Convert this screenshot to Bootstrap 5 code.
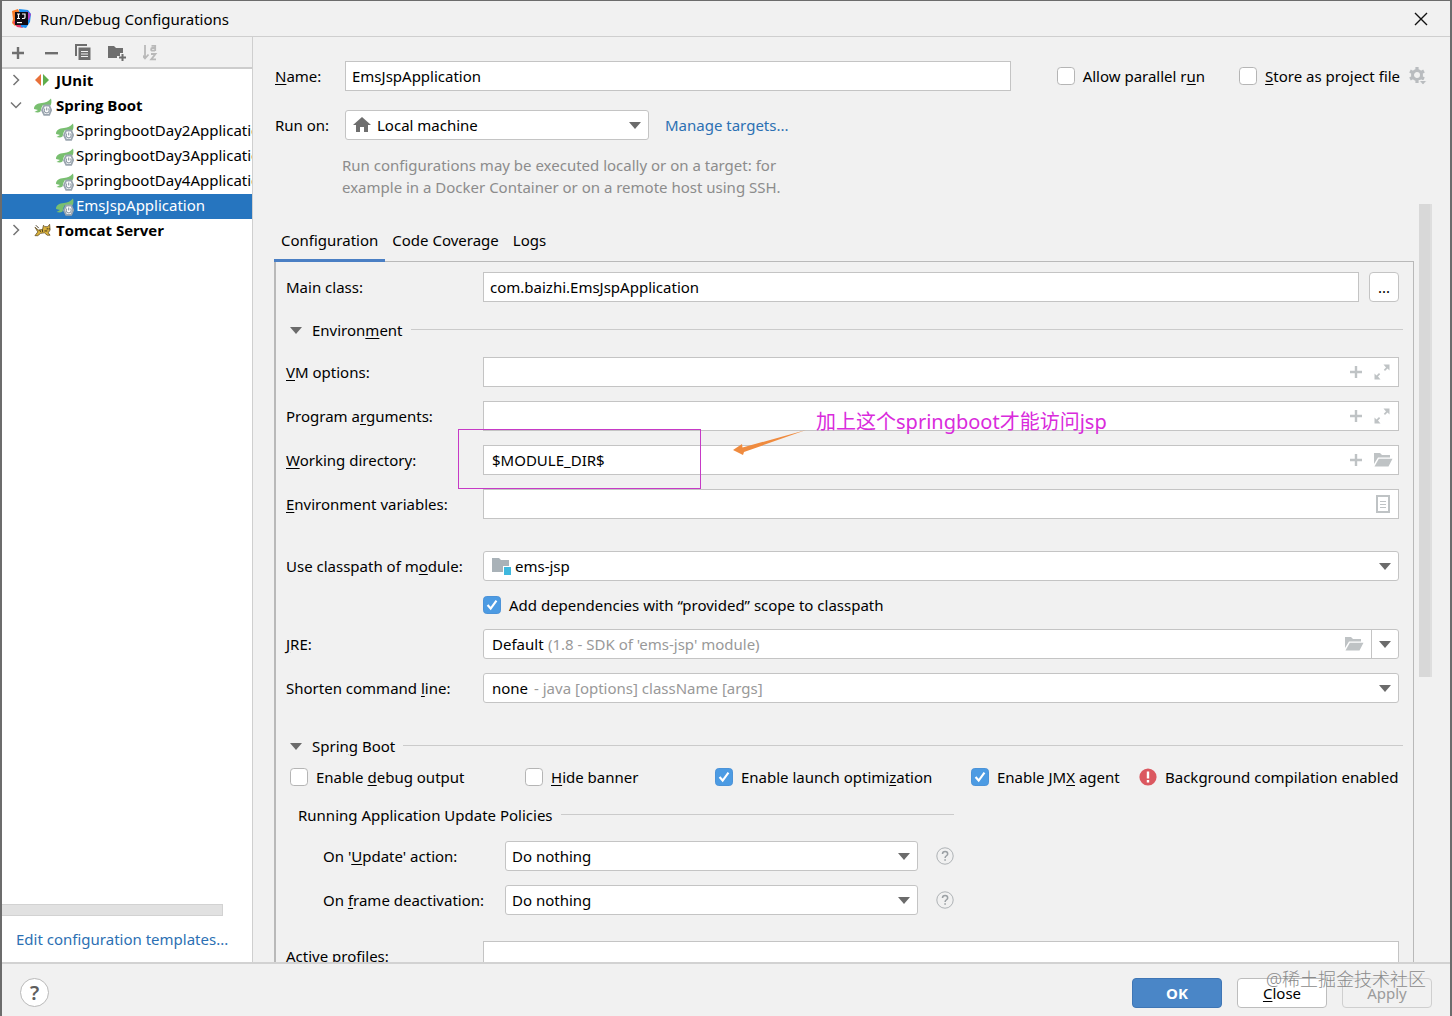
<!DOCTYPE html>
<html lang="en">
<head>
<meta charset="utf-8">
<meta name="viewport" content="width=device-width, initial-scale=1">
<title>Run/Debug Configurations</title>
<link href="https://cdn.jsdelivr.net/npm/bootstrap@5.3.0/dist/css/bootstrap.min.css" rel="stylesheet">
<style>
  :root { --line: #c4c4c4; --panel: #f1f1f1; --accent: #4a7fc4; --link: #2c70b3; --muted: #8c8c8c; --icon: #bfc3c5; }
  body { font-family: "Noto Sans", "Noto Sans CJK SC", sans-serif; font-size: 15px; line-height: 22px; color: #000; background: var(--panel); }
  a { color: var(--link); text-decoration: none; }
  u { text-underline-offset: 2px; }
  svg { display: block; flex: none; }
  .dialog { border: solid #6c6c6c; border-width: 1px 2px 0; }
  .title-bar { height: 36px; border-bottom: 1px solid #cfcfcf; padding: 1px 22px 0 9px; }
  .plain-btn { border: 0; background: none; padding: 0; color: inherit; }
  .side { width: 251px; background: #fff; border-right: 1px solid #cfcfcf; }
  .tools { height: 32px; background: var(--panel); border-bottom: 2px solid #cdcdcd; padding: 2px 0 0 9px; gap: 16px; }
  .tree-row { height: 25px; padding-bottom: 2px; white-space: nowrap; overflow: hidden; }
  .tree-head { padding-left: 8px; gap: 4px; font-family: "Open Sans", sans-serif; font-weight: 700; }
  .tree-leaf { padding-left: 54px; gap: 2px; }
  .tree-leaf.current { background: #2675bf; color: #fff; }
  .leaf-icon { margin-top: 4px; }
  .h-thumb { width: 221px; height: 12px; background: #e1e1e1; border: 1px solid #d2d2d2; border-left: 0; }
  .side-foot { padding: 12px 14px; }
  .content-top { padding: 24px 22px 0; }
  .top-label { width: 70px; }
  .form-control, .form-select { height: 30px; padding: 0 8px; font-size: 15px; line-height: 22px; color: #000; border-color: var(--line); border-radius: 0; background-color: #fff; }
  .form-select { border-radius: 3px; padding-right: 28px; background-position: right 7px center; background-size: 12px 8px;
    --bs-form-select-bg-img: url("data:image/svg+xml,%3csvg xmlns='http://www.w3.org/2000/svg' viewBox='0 0 12 8'%3e%3cpath fill='%236b6b6b' d='M0 1h12L6 8z'/%3e%3c/svg%3e"); }
  .form-control.tight { padding-left: 6px; }
  .form-select.with-icon { padding-left: 31px; }
  .lead-icon { left: 8px; }
  .run-row { margin-top: 19px; }
  .run-on { width: 304px; }
  .name-box { flex: 0 1 666px; }
  .form-check-input { width: 18px; height: 18px; margin: 0; border: 1px solid #b5b5b5; border-radius: 3px; flex: none; }
  .top-ticks { gap: 34px; }
  .form-check-input:checked { background-color: #4c9be3; border-color: #4c93d8; }
  .form-check-input:checked[type=checkbox] {
    --bs-form-check-bg-image: url("data:image/svg+xml,%3csvg xmlns='http://www.w3.org/2000/svg' viewBox='0 0 18 18'%3e%3cpath fill='none' stroke='%23fff' stroke-width='2.4' d='M4 9l3.500 4L14 4'/%3e%3c/svg%3e"); }
  .tick { gap: 8px; line-height: 20px; }
  .hint { color: var(--muted); width: 480px; padding-left: 67px; margin-top: 14px; }
  .scroll-area { margin-top: 6px; padding: 0 18px 0 21px; gap: 5px; }
  .tabs { padding-top: 25px; margin-bottom: -1px; position: relative; }
  .tabs .nav-link { color: #000; padding: 0 7px 8px; border-bottom: 3px solid transparent; }
  .tabs .nav-link.active { border-color: var(--accent); }
  .v-thumb { width: 13px; height: 473px; background: #d8d8d8; border-right: 2px solid #dedede; flex: none; }
  .panel-box { border: 1px solid #b9b9b9; border-left-width: 2px; border-bottom: 0; padding: 10px 14px 0 10px; }
  .fields { display: grid; grid-template-columns: 197px minmax(0, 1fr); row-gap: 14px; align-items: center; }
  .fields + .fields { margin-top: 14px; }
  .fields.spaced { margin-top: 32px; }
  .section { gap: 8px; margin-right: -4px; padding-left: 4px; }
  .section svg { margin-right: 2px; }
  .section::after { content: ""; flex: 1; height: 1px; background: #cbcbcb; }
  .section-env { margin-top: 17px; margin-bottom: 16px; }
  .section-boot { margin-top: 32px; }
  .in-icons { right: 8px; gap: 10px; color: var(--icon); }
  .in-icons.close-set { right: 6px; }
  .sq-btn { width: 30px; height: 30px; border: 1px solid var(--line); border-radius: 4px; background: #fff; margin-left: 10px; }
  .mark-box { left: 172px; top: -16px; width: 243px; height: 60px; border: 1px solid #c63ac6; pointer-events: none; }
  .mark-arrow { left: 446px; top: -16px; }
  .mark-text { left: 530px; top: -38px; font-size: 20px; line-height: 30px; color: #d92bdc; white-space: nowrap; }
  .jre-folder { right: 35px; color: var(--icon); }
  .jre-split { border-left: 1px solid var(--line); right: 27px; height: 28px; }
  .gray-hint { color: #999; left: 65px; pointer-events: none; }
  .gray-hint.near { left: 51px; }
  .boot-checks { display: grid; grid-template-columns: 235fr 190fr 256fr 168fr 264fr; margin: 10px -4px 17px 4px; white-space: nowrap; line-height: 20px; }
  .policies { max-width: 656px; margin-left: 12px; }
  .policy-grid { display: grid; grid-template-columns: 182px minmax(0, 1fr) 18px; gap: 14px 0; align-items: center; padding-left: 25px; margin: 15px 0 26px; }
  .policy-grid .form-select { width: calc(100% - 18px); padding-left: 6px; }
  .foot { height: 54px; border-top: 2px solid #d2d2d2; padding: 5px 18px 0; }
  .foot .btn { width: 90px; height: 30px; padding: 0; font-size: 15px; line-height: 22px; border-radius: 4px; border: 1px solid #bdbdbd; background: #fff; color: #000; }
  .foot .btn-ok { background: #4a86c7; border-color: #3f76b5; color: #fff; font-weight: 700; }
  .foot .btn:disabled { background: var(--panel); border-color: #cfcfcf; color: #9b9b9b; opacity: 1; }
  .btn-set { gap: 15px; }
  .help-btn { width: 29px; height: 29px; border: 1px solid #b9b9b9; background: #fff; color: #5e5e5e; font-size: 20px; line-height: 26px; font-weight: 600; }
  .watermark { right: 24px; top: 1px; font-size: 18px; line-height: 28px; color: #8b8b8b; pointer-events: none; font-weight: 300; }
</style>
</head>
<body>
<svg width="0" height="0" class="position-absolute" aria-hidden="true">
  <symbol id="leaf" viewBox="0 0 18 18">
    <path fill="#79bf70" d="M0 11C0 7 3 5.500 8 5c4-.4 6-1.500 9-4.500.8 3 .5 5-.5 7L9 7l-3 5.500z"/>
    <path fill="#79bf70" d="M.500 14l7-4-1 3.500q-2 1.500-6 .5z"/>
    <path fill="#fff" stroke="#9aa5af" stroke-width="1.800" d="M10.200 7.500h5l2 4.700-2 4.700h-5l-2.200-4.700z"/>
    <path fill="none" stroke="#8e9aa5" stroke-width="1.200" d="M12.700 9.500v3M11 10.600a2.500 2.500 0 1 0 3.400 0"/>
  </symbol>
  <symbol id="plus" viewBox="0 0 14 14"><path fill="currentColor" d="M5.800 1h2.400v4.800H13v2.400H8.200V13H5.800V8.200H1V5.800h4.800z"/></symbol>
  <symbol id="expand" viewBox="0 0 18 18"><path fill="currentColor" d="M10.500 1.500h6v6l-2-2-2.500 2.500-1.200-1.200L13 4.500zM7.500 16.500h-6v-6l2 2L6 10l1.200 1.200L5 13.500z"/></symbol>
  <symbol id="folder" viewBox="0 0 20 16"><path fill="currentColor" d="M1 1h6l2 2h8v2.500H5L1 12z"/><path fill="currentColor" d="M5.800 6.800h13.700L15.500 14.500H1.500z"/></symbol>
  <symbol id="help" viewBox="0 0 18 18"><circle cx="9" cy="9" r="8.200" fill="none" stroke="#aeb2b5"/><path fill="none" stroke="#9ba0a4" stroke-width="1.500" d="M6.500 7c0-3.200 5.200-3.200 5.200 0 0 1.800-2.600 1.800-2.600 4"/><path fill="#9ba0a4" d="M8.300 12.200h1.600v1.600H8.300z"/></symbol>
  <symbol id="chev" viewBox="0 0 12 12"><path fill="none" stroke="#757575" stroke-width="1.500" d="M3.500 1l5 5-5 5"/></symbol>
  <symbol id="tri" viewBox="0 0 12 8"><path fill="#6b6b6b" d="M0 1h12L6 8z"/></symbol>
</svg>

<div class="dialog vh-100 d-flex flex-column overflow-hidden position-relative">
  <header class="title-bar d-flex align-items-center">
    <svg width="21" height="21" viewBox="0 0 21 21"><path fill="#f97b26" d="M1 3l6-2 4 9-7 8-3-3 1-4z"/><path fill="#e83768" d="M2 14l5-3 5 9-6-1z"/><path fill="#1a8df0" d="M8 1l9 1 3 4-1 8-4 6-5-1z"/><path fill="#b43fc6" d="M15 3l5 3-2 6-4-2z"/><path fill="#0d0a12" d="M4 4h13v13H4z"/><path fill="none" stroke="#fff" stroke-width="1.200" d="M6 6h3M7.500 6v4.500M6 10.500h3M11 6h3v3.500q0 1-2 1h-1"/><path fill="#fff" d="M6 14h5v1.200H6z"/></svg>
    <span class="ms-2">Run/Debug Configurations</span>
    <button class="plain-btn ms-auto" aria-label="Close window"><svg width="14" height="14" viewBox="0 0 14 14"><path stroke="#111" stroke-width="1.400" d="M1 1l12 12M13 1L1 13"/></svg></button>
  </header>

  <div class="d-flex flex-grow-1 overflow-hidden">
    <aside class="side d-flex flex-column flex-shrink-0">
      <div class="tools d-flex align-items-center">
        <button class="plain-btn" aria-label="Add"><svg width="14" height="14" color="#6e6e6e"><use href="#plus"/></svg></button>
        <button class="plain-btn ms-1" aria-label="Remove"><svg width="14" height="14"><path fill="#6e6e6e" d="M0 6h13v2.400H0z"/></svg></button>
        <button class="plain-btn" aria-label="Copy"><svg width="17" height="17" viewBox="0 0 17 17"><path fill="#6e6e6e" d="M0 0h12v2H2v10H0z"/><path fill="#6e6e6e" d="M3.500 3.500H15.500V16h-12z"/><path stroke="#f1f1f1" d="M6 7.500h7M6 10h7M6 12.500h7"/></svg></button>
        <button class="plain-btn" aria-label="New folder"><svg width="19" height="17" viewBox="0 0 19 17"><path fill="#6e6e6e" d="M0 2h6l2 2h7v5h-3v3h-3v2H0z"/><path stroke="#6e6e6e" stroke-width="2" d="M14.500 10v7M11 13.500h7"/></svg></button>
        <button class="plain-btn" aria-label="Sort"><svg width="17" height="17" viewBox="2 0 17 17"><path fill="none" stroke="#b9b9b9" stroke-width="1.800" d="M4 1v13M.500 10.500l3.500 4 3.500-4M10.500 1.900h3.700V7M14 4h-2.600q-1.300 0-1.300 1.400t1.300 1.300h2.600M10 10h4.500l-4.300 5.400H15"/></svg></button>
      </div>
      <div class="flex-grow-1">
        <div class="tree-row tree-head d-flex align-items-center"><svg width="12" height="12"><use href="#chev"/></svg>
          <svg class="ms-2" width="18" height="16" viewBox="0 0 18 16"><path fill="#e8713a" d="M7 2v12L1 8z"/><path fill="#5fae4c" d="M9 2v12l6-6z"/></svg><span>JUnit</span></div>
        <div class="tree-row tree-head d-flex align-items-center"><svg width="12" height="12" viewBox="0 0 12 12"><path fill="none" stroke="#757575" stroke-width="1.500" d="M1 3.500l5 5 5-5"/></svg>
          <svg class="ms-2 leaf-icon" width="18" height="18"><use href="#leaf"/></svg><span>Spring Boot</span></div>
        <div class="tree-row tree-leaf d-flex align-items-center"><svg class="leaf-icon" width="18" height="18"><use href="#leaf"/></svg><span>SpringbootDay2Application</span></div>
        <div class="tree-row tree-leaf d-flex align-items-center"><svg class="leaf-icon" width="18" height="18"><use href="#leaf"/></svg><span>SpringbootDay3Application</span></div>
        <div class="tree-row tree-leaf d-flex align-items-center"><svg class="leaf-icon" width="18" height="18"><use href="#leaf"/></svg><span>SpringbootDay4Application</span></div>
        <div class="tree-row tree-leaf current d-flex align-items-center"><svg class="leaf-icon" width="18" height="18"><use href="#leaf"/></svg><span>EmsJspApplication</span></div>
        <div class="tree-row tree-head d-flex align-items-center"><svg width="12" height="12"><use href="#chev"/></svg>
          <svg class="ms-2" width="18" height="16" viewBox="0 0 19 16"><path fill="#d9b13c" stroke="#5c4a22" stroke-width=".8" d="M10 3l1.500 1.500h3L16.500 2l.5 6-2 3 2 2.500h-3L11 11l-4 .5-3 2.500H1l3-4-3-5 3.500 3 4.500-.5z"/><path stroke="#3f341b" d="M2 3l3 3M6 8l1 2M9 7.500v2.500M14 6v1.500M16 6v1.500M11 9h3"/></svg><span>Tomcat Server</span></div>
      </div>
      <div class="h-thumb"></div>
      <div class="side-foot text-nowrap"><a href="#">Edit configuration templates...</a></div>
    </aside>

    <main class="flex-grow-1 d-flex flex-column overflow-hidden">
      <div class="content-top">
        <div class="d-flex align-items-center">
          <label class="top-label" for="cfgName"><u>N</u>ame:</label>
          <input id="cfgName" class="form-control tight name-box" value="EmsJspApplication">
          <div class="top-ticks d-flex align-items-center ms-auto text-nowrap">
            <div class="tick d-flex align-items-center"><input type="checkbox" class="form-check-input" id="parallel"><label for="parallel">Allow parallel r<u>u</u>n</label></div>
            <div class="tick d-flex align-items-center"><input type="checkbox" class="form-check-input" id="store"><label for="store"><u>S</u>tore as project file</label>
              <svg width="20" height="18" viewBox="0 0 20 18"><circle cx="9" cy="8" r="4.500" fill="none" stroke="#b9bcbf" stroke-width="3"/><path stroke="#b9bcbf" stroke-width="3.200" d="M9 0v3M9 13v3M2 4l2.600 1.500M16 4l-2.600 1.500M2 12l2.600-1.500M16 12l-2.600-1.500"/><path fill="#b9bcbf" stroke="#f1f1f1" d="M11 13.500h8l-4 4.500z"/></svg></div>
          </div>
        </div>
        <div class="run-row d-flex align-items-center">
          <label class="top-label" for="runOn">Run on:</label>
          <div class="run-on position-relative d-flex align-items-center">
            <select id="runOn" class="form-select with-icon"><option>Local machine</option></select>
            <svg class="lead-icon position-absolute" width="18" height="16" viewBox="0 0 18 16"><path fill="#6e6e6e" d="M9 0l9 8h-3v7h-4v-5H7v5H3V8H0z"/></svg>
          </div>
          <a href="#" class="ms-3">Manage targets...</a>
        </div>
        <div class="hint text-nowrap">Run configurations may be executed locally or on a target: for<br>example in a Docker Container or on a remote host using SSH.</div>
      </div>

      <div class="scroll-area d-flex flex-grow-1 overflow-hidden">
        <div class="flex-grow-1 d-flex flex-column">
          <nav class="tabs nav">
            <a class="nav-link active" href="#">Configuration</a><a class="nav-link" href="#">Code Coverage</a><a class="nav-link" href="#">Logs</a>
          </nav>
          <div class="panel-box flex-grow-1">
            <div class="fields">
              <label for="mainClass">Main class:</label>
              <div class="d-flex"><input id="mainClass" class="form-control tight" value="com.baizhi.EmsJspApplication"><button class="sq-btn flex-shrink-0 p-0">...</button></div>
            </div>
            <div class="section section-env d-flex align-items-center"><svg width="12" height="8"><use href="#tri"/></svg><span>Environ<u>m</u>ent</span></div>
            <div class="fields">
              <label for="vm"><u>V</u>M options:</label>
              <div class="position-relative d-flex align-items-center"><input id="vm" class="form-control"><span class="in-icons position-absolute d-flex align-items-center"><svg width="14" height="14"><use href="#plus"/></svg><svg width="18" height="18"><use href="#expand"/></svg></span></div>
              <label for="args">Program a<u>r</u>guments:</label>
              <div class="position-relative d-flex align-items-center"><input id="args" class="form-control"><span class="in-icons position-absolute d-flex align-items-center"><svg width="14" height="14"><use href="#plus"/></svg><svg width="18" height="18"><use href="#expand"/></svg></span></div>
            </div>
            <div class="fields position-relative">
              <label for="wd"><u>W</u>orking directory:</label>
              <div class="position-relative d-flex align-items-center"><input id="wd" class="form-control" value="$MODULE_DIR$"><span class="in-icons close-set position-absolute d-flex align-items-center"><svg width="14" height="14"><use href="#plus"/></svg><svg width="20" height="16"><use href="#folder"/></svg></span></div>
              <div class="mark-box position-absolute"></div>
              <svg class="mark-arrow position-absolute" width="76" height="26" viewBox="0 0 76 26"><path fill="#ef8b3f" d="M74 1L12 23l-1 3L1 21l9-6 .5 3.500z"/></svg>
              <span class="mark-text position-absolute">加上这个springboot才能访问jsp</span>
            </div>
            <div class="fields">
              <label for="env"><u>E</u>nvironment variables:</label>
              <div class="position-relative d-flex align-items-center"><input id="env" class="form-control"><span class="in-icons position-absolute"><svg width="16" height="18" viewBox="0 0 16 18"><path fill="none" stroke="currentColor" stroke-width="2" d="M2 1h12v16H2z"/><path stroke="currentColor" d="M5 6.500h6M5 9.500h6M5 12.500h6"/></svg></span></div>
            </div>
            <div class="fields spaced">
              <label for="module">Use classpath of m<u>o</u>dule:</label>
              <div class="position-relative d-flex align-items-center"><select id="module" class="form-select with-icon"><option>ems-jsp</option></select>
                <svg class="lead-icon position-absolute" width="20" height="18" viewBox="0 0 20 18"><path fill="#a9b2b8" d="M1 1h7l2 2h8v6h-6v6H1z"/><path fill="#3fb8de" d="M13 10h7v8h-7z"/></svg></div>
              <span></span>
              <div class="tick d-flex align-items-center"><input type="checkbox" class="form-check-input" id="provided" checked><label for="provided">Add dependencies with “provided” scope to classpath</label></div>
              <label for="jre"><u>J</u>RE:</label>
              <div class="position-relative d-flex align-items-center"><select id="jre" class="form-select"><option>Default</option></select><span class="gray-hint position-absolute">(1.8 - SDK of 'ems-jsp' module)</span>
                <span class="jre-folder position-absolute"><svg width="20" height="16"><use href="#folder"/></svg></span><span class="jre-split position-absolute"></span></div>
              <label for="shorten">Shorten command <u>l</u>ine:</label>
              <div class="position-relative d-flex align-items-center"><select id="shorten" class="form-select"><option>none</option></select><span class="gray-hint near position-absolute">- java [options] className [args]</span></div>
            </div>
            <div class="section section-boot d-flex align-items-center"><svg width="12" height="8"><use href="#tri"/></svg><span>Sprin<u>g</u> Boot</span></div>
            <div class="boot-checks">
              <div class="tick d-flex align-items-center"><input type="checkbox" class="form-check-input" id="dbg"><label for="dbg">Enable <u>d</u>ebug output</label></div>
              <div class="tick d-flex align-items-center"><input type="checkbox" class="form-check-input" id="banner"><label for="banner"><u>H</u>ide banner</label></div>
              <div class="tick d-flex align-items-center"><input type="checkbox" class="form-check-input" id="launch" checked><label for="launch">Enable launch optimi<u>z</u>ation</label></div>
              <div class="tick d-flex align-items-center"><input type="checkbox" class="form-check-input" id="jmx" checked><label for="jmx">Enable JM<u>X</u> agent</label></div>
              <div class="d-flex align-items-center"><svg class="me-2" width="18" height="18" viewBox="0 0 18 18"><circle cx="9" cy="9" r="8.600" fill="#db5860"/><path fill="#fff" d="M7.800 3.500h2.400v7H7.800zM7.800 12h2.400v2.400H7.800z"/></svg><span>Background compilation enabled</span></div>
            </div>
            <div class="policies">
              <div class="section d-flex align-items-center ps-0 me-0">Running Application Update Policies</div>
              <div class="policy-grid">
                <label for="upd">On '<u>U</u>pdate' action:</label><select id="upd" class="form-select"><option>Do nothing</option></select><svg width="18" height="18"><use href="#help"/></svg>
                <label for="deact">On <u>f</u>rame deactivation:</label><select id="deact" class="form-select"><option>Do nothing</option></select><svg width="18" height="18"><use href="#help"/></svg>
              </div>
            </div>
            <div class="fields">
              <label for="profiles">Active profiles:</label><input id="profiles" class="form-control">
            </div>
          </div>
        </div>
        <div class="v-thumb"></div>
      </div>
    </main>
  </div>

  <footer class="foot d-flex align-items-center flex-shrink-0 position-relative">
    <button class="help-btn rounded-circle p-0" aria-label="Help">?</button>
    <div class="btn-set d-flex ms-auto">
      <button class="btn btn-ok">OK</button>
      <button class="btn"><u>C</u>lose</button>
      <button class="btn" disabled>Apply</button>
    </div>
    <span class="watermark position-absolute">@稀土掘金技术社区</span>
  </footer>
</div>
<script src="https://cdn.jsdelivr.net/npm/bootstrap@5.3.0/dist/js/bootstrap.bundle.min.js"></script>
</body>
</html>
